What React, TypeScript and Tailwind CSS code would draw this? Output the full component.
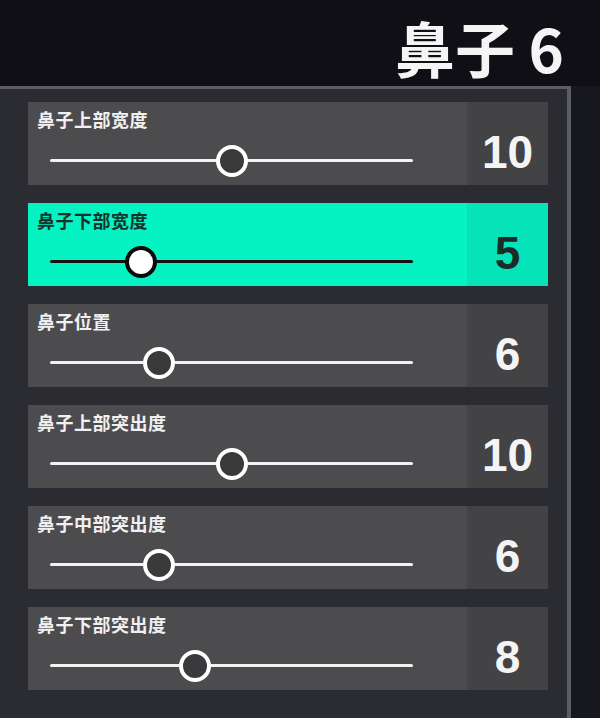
import React from "react";

const rows = [
  { label: "鼻子上部宽度", value: 10 },
  { label: "鼻子下部宽度", value: 5, active: true },
  { label: "鼻子位置", value: 6 },
  { label: "鼻子上部突出度", value: 10 },
  { label: "鼻子中部突出度", value: 6 },
  { label: "鼻子下部突出度", value: 8 },
];

const cjk = { fontFamily: '"Noto Sans CJK SC", "Noto Sans", sans-serif' };
const num = { fontFamily: '"Liberation Sans", Arial, sans-serif' };

function Row({ label, value, active }: { label: string; value: number; active?: boolean }) {
  const pct = value / 20;
  return (
    <div className={`flex h-[83px] ${active ? "bg-[#05f2c3]" : "bg-[#4c4c4f]"}`}>
      <div className="flex-1 flex flex-col pl-[9px] pt-[6px]">
        <div
          className={`text-[18px] font-bold leading-[23px] tracking-[0.5px] ${active ? "text-[#16332c]" : "text-[#f0f0f0]"}`}
          style={cjk}
        >
          {label}
        </div>
        <div className="relative ml-[13px] mt-[28px] h-[3px] w-[363px]">
          <div className={`absolute inset-0 rounded-full ${active ? "bg-[#111]" : "bg-[#f2f2f2]"}`} />
          <div
            className={`absolute top-1/2 h-[32px] w-[32px] -translate-x-1/2 -translate-y-1/2 rounded-full border-[4px] ${
              active ? "border-[#0a0a0a] bg-white" : "border-white bg-[#3a3a3c]"
            }`}
            style={{ left: `${pct * 100}%` }}
          />
        </div>
      </div>
      <div
        className={`flex w-[81px] items-center justify-center pt-[18px] text-[46px] font-bold ${
          active ? "bg-[#07e3b8] text-[#1c2b28]" : "bg-[#434346] text-[#f4f4f4]"
        }`}
        style={num}
      >
        {value}
      </div>
    </div>
  );
}

export default function App() {
  return (
    <div className="flex h-[718px] w-[600px] flex-col overflow-hidden bg-[#0f0f15]">
      <div className="flex h-[86px] items-center justify-end pr-[36px] pt-[8px]">
        <span className="text-[60px] font-bold leading-none text-[#f5f5f5]" style={cjk}>
          鼻子 6
        </span>
      </div>
      <div className="flex flex-1">
        <div className="w-[571px] border-r-[4px] border-t-[3px] border-[#5c5c63] bg-[#2b2b32] pl-[28px] pr-[19px] pt-[13px]">
          <div className="flex flex-col gap-[18px]">
            {rows.map((r) => (
              <Row key={r.label} {...r} />
            ))}
          </div>
        </div>
        <div className="flex-1 bg-[#17171e]" />
      </div>
    </div>
  );
}
